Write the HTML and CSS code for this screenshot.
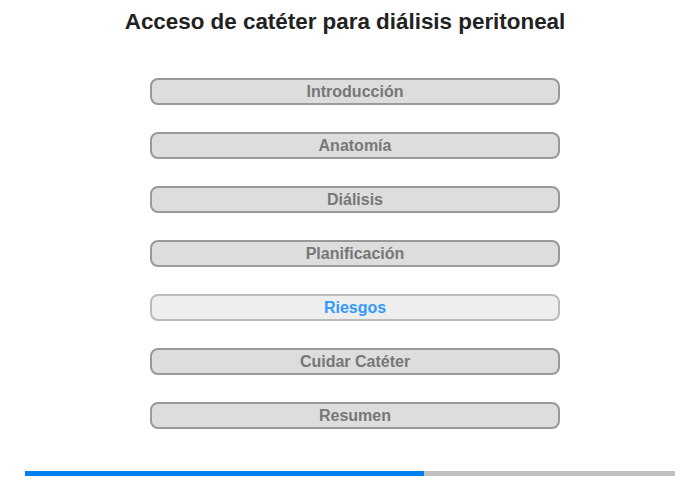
FILE: index.html
```html
<!DOCTYPE html>
<html lang="es">
<head>
<meta charset="utf-8">
<link rel="stylesheet" href="styles.css">
</head>
<body>
<div class="page">
  <h1 class="title">Acceso de catéter para diálisis peritoneal</h1>
  <nav class="menu">
    <div class="item">Introducción</div>
    <div class="item">Anatomía</div>
    <div class="item">Diálisis</div>
    <div class="item">Planificación</div>
    <div class="item active">Riesgos</div>
    <div class="item">Cuidar Catéter</div>
    <div class="item">Resumen</div>
  </nav>
  <div class="progress"><div class="fill" style="width:61.4%"></div></div>
</div>
</body>
</html>
```
FILE: styles.css
```css
html, body { margin: 0; padding: 0; background: #fff; }
body { font-family: "Liberation Sans", Arial, sans-serif; }
.page { width: 700px; height: 480px; display: flex; flex-direction: column; align-items: center; }
.title { margin: 8px 0 0 -10px; font-size: 22.4px; line-height: 28px; font-weight: bold; color: #222; }
.menu { margin: 42px 0 0 10px; display: flex; flex-direction: column; gap: 27px; }
.item { width: 406px; height: 23px; border: 2px solid #999; border-radius: 8px; background: #ddd; color: #777; font-weight: bold; font-size: 16px; line-height: 23px; text-align: center; }
.item.active { background: #eee; border-color: #bbb; color: #3399ff; }
.progress { margin-top: 42px; width: 650px; height: 5px; background: #c0c0c0; flex: none; }
.fill { height: 100%; background: #0080f0; }
```
